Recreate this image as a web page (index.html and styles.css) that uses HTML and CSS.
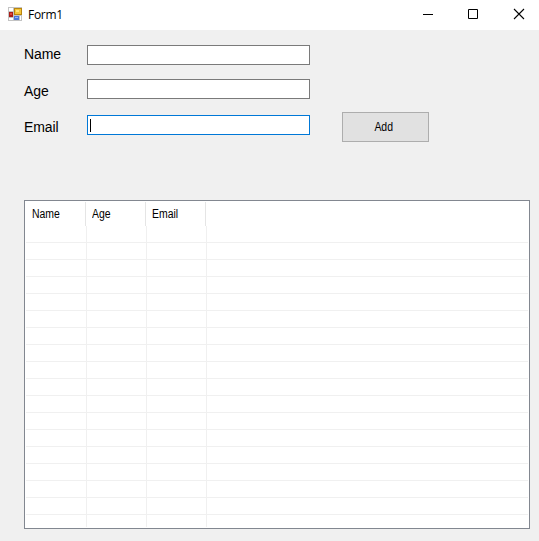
FILE: index.html
```
<!DOCTYPE html>
<html lang="en">
<head>
<meta charset="utf-8">
<title>Form1</title>
<link rel="stylesheet" href="styles.css">
</head>
<body>
<header class="titlebar">
  <svg class="app-icon" width="14" height="14" viewBox="0 0 14 14" shape-rendering="crispEdges">
    <path d="M0 0h14v14H0z" fill="#c3c3c3"/>
    <path d="M1 1h4v3H1zM1 11h4v2H1zM12 9h1v4h-1z" fill="#fff"/>
    <path d="M6 1h8v7H6z" fill="#b8860f"/>
    <path d="M7 2h6v5H7z" fill="#f4c438"/>
    <path d="M8 3h3v2H8z" fill="#ffe37a"/>
    <path d="M1 5h4v5H1z" fill="#a91d18"/>
    <path d="M2 6h2v2H2z" fill="#e0483a"/>
    <path d="M6 9h5v4H6z" fill="#4a78d8"/>
    <path d="M7 10h3v1H7z" fill="#8eb4ff"/>
  </svg>
  <span class="title">Form1</span>
  <svg class="control" width="46" height="30" viewBox="0 0 46 30"><path d="M18 14.5h10" stroke="#000"/></svg>
  <svg class="control" width="46" height="30" viewBox="0 0 46 30"><path d="M17.5 9.5h9v9h-9z" fill="none" stroke="#000"/></svg>
  <svg class="control" width="42" height="30" viewBox="0 0 42 30"><path d="M17 9l10 10M27 9L17 19" stroke="#000" stroke-width="1.1"/></svg>
</header>
<main class="client">
  <div class="entry">
    <div class="field field-name"><label for="name">Name</label><input id="name"></div>
    <div class="field field-age"><label for="age">Age</label><input id="age"></div>
    <div class="field field-email"><label for="email">Email</label><div id="email" class="box focused"><i class="caret"></i></div>
      <button><span class="narrow">Add</span></button></div>
  </div>
  <section class="list">
    <div class="head"><div><span class="narrow">Name</span></div><div><span class="narrow">Age</span></div><div><span class="narrow">Email</span></div></div>
    <div class="rows"><div></div><div></div><div></div></div>
  </section>
</main>
</body>
</html>
```
FILE: styles.css
```
* { box-sizing: border-box; }
body { margin: 0; height: 541px; overflow: hidden; background: #f0f0f0; color: #000; font-family: "Liberation Sans", Arial, sans-serif; }
.titlebar { display: flex; height: 30px; background: #fff; padding-left: 8px; }
.app-icon { margin-top: 7px; flex: none; }
.title { margin-left: 6px; margin-right: auto; font: 12px/30px "Open Sans", "Segoe UI", sans-serif; letter-spacing: -0.3px; }
.control { flex: none; }
.client { padding: 15px 9px 0 24px; }
.entry { height: 155px; }
.field { display: flex; height: 20px; }
.field-age { margin-top: 14px; }
.field-email { margin-top: 16px; }
label { width: 63px; flex: none; font-size: 14px; line-height: 20px; letter-spacing: -0.1px; }
.field-name label { line-height: 18px; }
.field-age label, .field-email label { padding-top: 2px; }
input, .box { width: 223px; height: 20px; margin: 0; padding: 0 3px; border: 1px solid #7a7a7a; border-radius: 0; background: #fff; outline: none; }
.focused { border-color: #0078d7; padding-top: 3px; }
.caret { display: block; width: 1px; height: 13px; background: #000; margin-left: -1px; }
button { width: 87px; height: 30px; margin: -3px 0 0 32px; padding: 0 3px 0 0; border: 1px solid #adadad; border-radius: 0; background: #e1e1e1; color: #000; font-family: inherit; line-height: 28px; }
.narrow { display: inline-block; font-size: 12px; transform: scaleX(0.87); }
.list { display: flex; flex-direction: column; height: 329px; border: 1px solid #828790; background: #fff; padding: 1px; }
.head { display: flex; height: 24px; flex: none; }
.head div { width: 60px; padding-left: 6px; line-height: 22px; border-right: 1px solid #e5e5e5; }
.head .narrow { transform-origin: left; }
.rows { display: flex; flex: 1; background: repeating-linear-gradient(to bottom, transparent 0 16px, #f0f0f0 16px 17px); }
.rows div { width: 60px; border-right: 1px solid #f0f0f0; }
.rows div:first-child { width: 61px; }
```
